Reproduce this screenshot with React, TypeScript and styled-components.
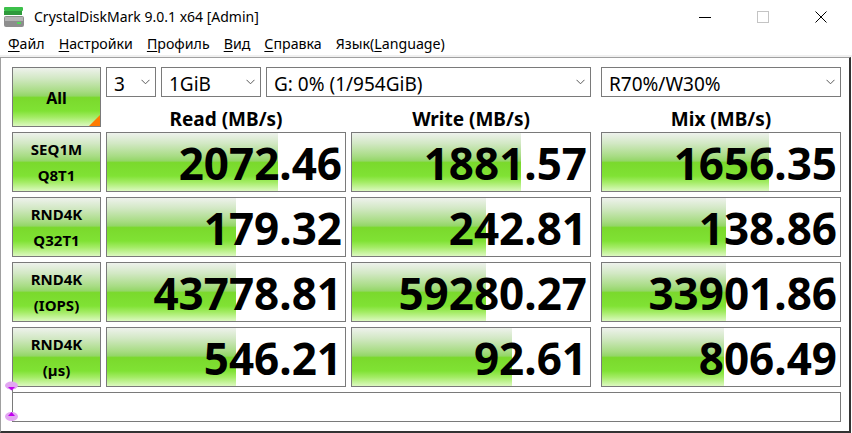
import styled, { createGlobalStyle } from "styled-components";

const GlobalStyle = createGlobalStyle`
  html, body {
    margin: 0;
    padding: 0;
    background: #fff;
  }
  body {
    font-family: "Noto Sans", "DejaVu Sans", sans-serif;
    color: #000;
  }
`;

const GREEN = `linear-gradient(
  to bottom,
  #eef2ec 0%,
  #d2e8c4 18%,
  #a8dc84 40%,
  #94d668 48%,
  #7ad92c 51%,
  #80e234 74%,
  #a4ec66 85%,
  #dcf9c0 100%
)`;

const Window = styled.div`
  width: 852px;
  height: 433px;
  display: flex;
  flex-direction: column;
  background: #fff;
  overflow: hidden;
`;

const TitleBar = styled.div`
  height: 33px;
  flex-shrink: 0;
  display: flex;
  align-items: center;
`;

const AppIcon = styled.svg`
  margin-left: 4px;
  flex-shrink: 0;
`;

const Title = styled.span`
  margin-left: 10px;
  font-size: 14px;
`;

const Controls = styled.div`
  margin-left: auto;
  margin-right: 2px;
  height: 100%;
  display: flex;
`;

const ControlButton = styled.div`
  width: 58px;
  display: flex;
  align-items: center;
  justify-content: center;
`;

const MenuBar = styled.div`
  height: 22px;
  flex-shrink: 0;
  display: flex;
  align-items: center;
  padding-left: 1px;
  font-size: 14.2px;
`;

const MenuItem = styled.span`
  padding: 0 7px;
  line-height: 22px;

  u {
    text-underline-offset: 2px;
  }
`;

const Strip = styled.div`
  height: 2px;
  flex-shrink: 0;
  background: #f0f0f0;
`;

const Client = styled.div`
  position: relative;
  flex: 1;
  margin-right: 1px;
  padding: 9px 0 0 11px;
  border-top: 1px solid #a0a0a0;
  border-left: 1px solid #a0a0a0;
  border-right: 2px solid #333;
  border-bottom: 2px solid #333;
`;

const Board = styled.div`
  display: grid;
  grid-template-columns: 89px 240px 240px 245px;
  grid-template-rows: 30px 25px repeat(4, 60px) 30px;
  column-gap: 5px;
  row-gap: 5px;
`;

const AllButton = styled.div`
  position: relative;
  grid-row: 1 / span 2;
  box-sizing: border-box;
  border: 1px solid #7a7a7a;
  background: ${GREEN};
  display: flex;
  align-items: center;
  justify-content: center;
  font-size: 16px;
  font-weight: 700;
  padding-top: 1px;
`;

const Corner = styled.span`
  position: absolute;
  right: 0;
  bottom: 0;
  width: 11px;
  height: 11px;
  background: #ff7a00;
  clip-path: polygon(100% 0, 100% 100%, 0 100%);
`;

const ComboRow = styled.div`
  grid-column: 2 / span 2;
  display: flex;
  gap: 5px;
`;

const Combo = styled.div<{ $w: number; $mix?: boolean }>`
  width: ${(p) => p.$w}px;
  margin-left: ${(p) => (p.$mix ? 5 : 0)}px;
  box-sizing: border-box;
  border: 1px solid #7a7a7a;
  background: #fff;
  display: flex;
  align-items: center;
  justify-content: space-between;
  padding: 3px 5px 0 7px;
  font-size: 19px;
  white-space: nowrap;
`;

const Chevron = styled.svg`
  flex-shrink: 0;
  margin-top: -3px;
`;

const Header = styled.div<{ $mix?: boolean }>`
  margin-left: ${(p) => (p.$mix ? 5 : 0)}px;
  margin-bottom: -2px;
  align-self: end;
  text-align: center;
  font-size: 19px;
  font-weight: 700;
  line-height: 20px;
`;

const Label = styled.div`
  box-sizing: border-box;
  border: 1px solid #7a7a7a;
  background: ${GREEN};
  display: flex;
  flex-direction: column;
  align-items: center;
  justify-content: center;
  font-size: 15px;
  font-weight: 700;
  line-height: 26px;
`;

const Value = styled.div<{ $mix?: boolean }>`
  margin-left: ${(p) => (p.$mix ? 5 : 0)}px;
  box-sizing: border-box;
  border: 1px solid #7a7a7a;
  background-color: #fff;
  background-image: ${GREEN};
  background-repeat: no-repeat;
  display: flex;
  align-items: center;
  justify-content: flex-end;
  padding: 2px 3px 0 0;
  font-size: 44px;
  font-weight: 700;
  line-height: 56px;
  overflow: hidden;
`;

const Comment = styled.div`
  grid-column: 1 / -1;
  box-sizing: border-box;
  border: 1px solid #7a7a7a;
  background: #fff;
`;

const Markers = styled.svg`
  position: absolute;
  left: 3px;
  top: 322px;
`;

const ChevronIcon = () => (
  <Chevron width="9" height="6" viewBox="0 0 9 6">
    <path d="M0.5 0.8 L4.5 4.8 L8.5 0.8" fill="none" stroke="#5a5a5a" strokeWidth="1" />
  </Chevron>
);

const rows = [
  { label: ["SEQ1M", "Q8T1"], values: [["2072.46", 171], ["1881.57", 169], ["1656.35", 167]] },
  { label: ["RND4K", "Q32T1"], values: [["179.32", 129], ["242.81", 134], ["138.86", 124]] },
  { label: ["RND4K", "(IOPS)"], values: [["43778.81", 129], ["59280.27", 134], ["33901.86", 124]] },
  { label: ["RND4K", "(µs)"], values: [["546.21", 129], ["92.61", 160], ["806.49", 122]] },
] as const;

const menus: [string, string][] = [
  ["Ф", "айл"],
  ["Н", "астройки"],
  ["П", "рофиль"],
  ["В", "ид"],
  ["С", "правка"],
];

export default function App() {
  return (
    <Window>
      <GlobalStyle />
      <TitleBar>
        <AppIcon width="20" height="20" viewBox="0 0 20 20">
          <rect x="0" y="0" width="19" height="4" rx="1" fill="#3cc04a" />
          <rect x="0" y="4" width="18" height="4" fill="#2f9a3c" />
          <rect x="0" y="9" width="20" height="11" rx="2" fill="#8e8e8e" />
          <rect x="1" y="10" width="18" height="4" fill="#b4b4b4" />
          <rect x="13" y="15" width="4" height="2" fill="#52d85a" />
        </AppIcon>
        <Title>CrystalDiskMark 9.0.1 x64 [Admin]</Title>
        <Controls>
          <ControlButton>
            <svg width="12" height="12" viewBox="0 0 12 12">
              <rect x="0" y="6" width="12" height="1" fill="#000" />
            </svg>
          </ControlButton>
          <ControlButton>
            <svg width="12" height="12" viewBox="0 0 12 12">
              <rect x="0.5" y="0.5" width="11" height="11" fill="none" stroke="#c4c4c4" />
            </svg>
          </ControlButton>
          <ControlButton>
            <svg width="12" height="12" viewBox="0 0 12 12">
              <path d="M0.5 0.5 L11.5 11.5 M11.5 0.5 L0.5 11.5" stroke="#000" strokeWidth="1" />
            </svg>
          </ControlButton>
        </Controls>
      </TitleBar>

      <MenuBar>
        {menus.map(([key, rest]) => (
          <MenuItem key={key}>
            <u>{key}</u>
            {rest}
          </MenuItem>
        ))}
        <MenuItem>
          Язык(<u>L</u>anguage)
        </MenuItem>
      </MenuBar>
      <Strip />

      <Client>
        <Board>
          <AllButton>
            All
            <Corner />
          </AllButton>
          <ComboRow>
            <Combo $w={50}>
              3<ChevronIcon />
            </Combo>
            <Combo $w={100}>
              1GiB<ChevronIcon />
            </Combo>
            <Combo $w={325}>
              G: 0% (1/954GiB)<ChevronIcon />
            </Combo>
          </ComboRow>
          <Combo $w={240} $mix>
            R70%/W30%<ChevronIcon />
          </Combo>

          <Header>Read (MB/s)</Header>
          <Header>Write (MB/s)</Header>
          <Header $mix>Mix (MB/s)</Header>

          {rows.map((row) => [
            <Label key={row.label.join()}>
              <span>{row.label[0]}</span>
              <span>{row.label[1]}</span>
            </Label>,
            ...row.values.map(([text, fill], i) => (
              <Value
                key={row.label.join() + i}
                $mix={i === 2}
                style={{ backgroundSize: `${fill}px 100%` }}
              >
                {text}
              </Value>
            )),
          ])}

          <Comment />
        </Board>

        <Markers width="16" height="44" viewBox="0 0 16 44">
          <line x1="8.5" y1="8" x2="8.5" y2="13" stroke="#808080" />
          <ellipse cx="7.5" cy="5.5" rx="6.5" ry="4" fill="#e2a6f2" />
          <path d="M4 7 L11 7 L7.5 10.5 Z" fill="#c000ee" />
          <ellipse cx="7.5" cy="36.5" rx="6.5" ry="4.5" fill="#e2a6f2" />
          <path d="M7.5 32 L11 36 L4 36 Z" fill="#c000ee" />
        </Markers>
      </Client>
    </Window>
  );
}
